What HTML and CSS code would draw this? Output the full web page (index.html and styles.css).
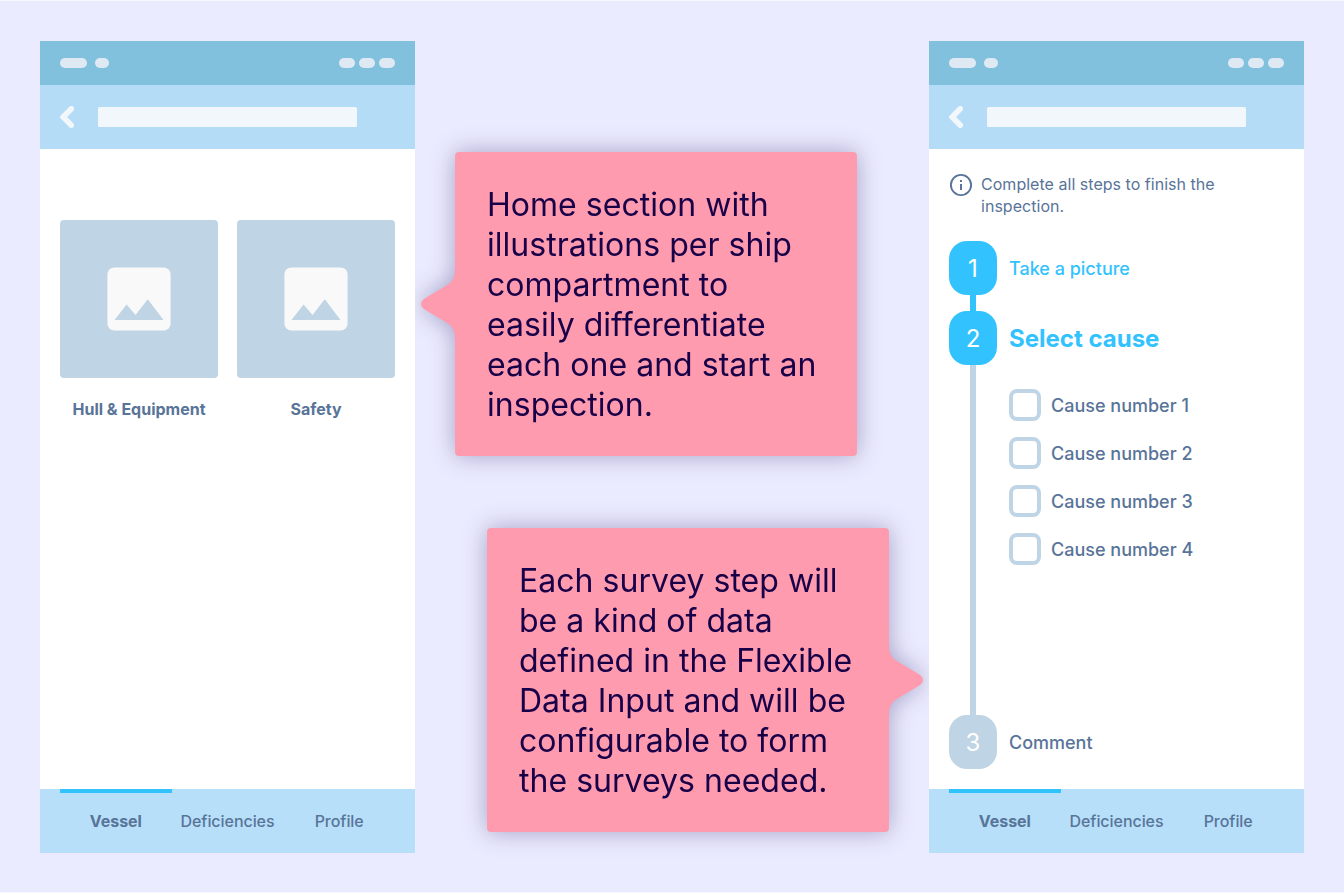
FILE: index.html
```html
<!DOCTYPE html>
<html lang="en">
<head>
<meta charset="utf-8">
<title>Vessel inspection</title>
<link rel="stylesheet" href="styles.css">
</head>
<body>
<main class="board">
  <section class="phone">
    <div class="status"><i class="pill wide"></i><i class="pill small"></i><span class="spacer"></span><i class="pill"></i><i class="pill"></i><i class="pill"></i></div>
    <header class="header">
      <svg class="back" width="14" height="22" viewBox="0 0 14 22"><path d="M11.300 2.800 3.100 11l8.200 8.200" fill="none" stroke="#f2f7fb" stroke-width="5.600" stroke-linecap="round" stroke-linejoin="miter"/></svg>
      <div class="title-bar"></div>
    </header>
    <div class="home">
      <figure class="card">
        <div class="thumb"><svg width="64" height="64" viewBox="0 0 64 64"><rect x=".4" y=".4" width="63.2" height="63.2" rx="7" fill="#f9f9f9"/><path d="M7.500 53 19.600 37.400 28.500 48 40.800 32.200 56.500 53Z" fill="#bfd4e5"/></svg></div>
        <figcaption>Hull &amp; Equipment</figcaption>
      </figure>
      <figure class="card">
        <div class="thumb"><svg width="64" height="64" viewBox="0 0 64 64"><rect x=".4" y=".4" width="63.2" height="63.2" rx="7" fill="#f9f9f9"/><path d="M7.500 53 19.600 37.400 28.500 48 40.800 32.200 56.500 53Z" fill="#bfd4e5"/></svg></div>
        <figcaption>Safety</figcaption>
      </figure>
    </div>
    <nav class="tabs"><span class="tab active">Vessel</span><span class="tab">Deficiencies</span><span class="tab">Profile</span></nav>
  </section>

  <div class="notes">
    <aside class="note note-left">
      <svg class="tail" width="36" height="68" viewBox="0 0 36 68"><path d="M36 0H35C35 7.500 32 12.500 26.500 15.500L5 28.300Q1 30.800 1 34Q1 37.200 5 39.700L26.500 52.500C32 55.500 35 60.500 35 68H36Z" fill="#ff9bae"/></svg>
      <p>Home section with<br>illustrations per ship<br>compartment to<br>easily differentiate<br>each one and start an<br>inspection.</p>
    </aside>
    <aside class="note note-right">
      <svg class="tail" width="36" height="68" viewBox="0 0 36 68"><path d="M36 0H35C35 7.500 32 12.500 26.500 15.500L5 28.300Q1 30.800 1 34Q1 37.200 5 39.700L26.500 52.500C32 55.500 35 60.500 35 68H36Z" fill="#ff9bae"/></svg>
      <p>Each survey step will<br>be a kind of data<br>defined in the Flexible<br>Data Input and will be<br>configurable to form<br>the surveys needed.</p>
    </aside>
  </div>

  <section class="phone">
    <div class="status"><i class="pill wide"></i><i class="pill small"></i><span class="spacer"></span><i class="pill"></i><i class="pill"></i><i class="pill"></i></div>
    <header class="header">
      <svg class="back" width="14" height="22" viewBox="0 0 14 22"><path d="M11.300 2.800 3.100 11l8.200 8.200" fill="none" stroke="#f2f7fb" stroke-width="5.600" stroke-linecap="round" stroke-linejoin="miter"/></svg>
      <div class="title-bar"></div>
    </header>
    <div class="survey">
      <div class="hint">
        <svg width="24" height="24" viewBox="0 0 24 24"><circle cx="12" cy="12" r="10.100" fill="none" stroke="#587498" stroke-width="1.900"/><path d="M11 7h2v2h-2zM11 11h2v6h-2z" fill="#587498"/></svg>
        <p>Complete all steps to finish the<br>inspection.</p>
      </div>
      <div class="step done"><span class="badge">1</span><span class="label">Take a picture</span></div>
      <div class="link done"></div>
      <div class="step done current"><span class="badge">2</span><span class="label">Select cause</span></div>
      <div class="step-body">
        <div class="link"></div>
        <div class="options">
          <label class="option"><span class="box"></span>Cause number 1</label>
          <label class="option"><span class="box"></span>Cause number 2</label>
          <label class="option"><span class="box"></span>Cause number 3</label>
          <label class="option"><span class="box"></span>Cause number 4</label>
        </div>
      </div>
      <div class="step"><span class="badge">3</span><span class="label">Comment</span></div>
    </div>
    <nav class="tabs"><span class="tab active">Vessel</span><span class="tab">Deficiencies</span><span class="tab">Profile</span></nav>
  </section>
</main>
</body>
</html>
```
FILE: styles.css
```css
* { box-sizing: border-box; }
body { margin: 0; font-family: Inter, "Liberation Sans", sans-serif; color: #587498; }
p, figure { margin: 0; }
svg { display: block; flex: none; }
.board {
  display: flex;
  justify-content: space-between;
  height: 893px;
  padding: 40px;
  background: #eaebff;
  border-top: 1px solid #f6f7ff;
  border-bottom: 1px solid #f6f7ff;
}
.phone {
  position: relative;
  z-index: 1;
  display: flex;
  flex-direction: column;
  width: 375px;
  height: 812px;
  background: #fff;
}
.status {
  display: flex;
  align-items: center;
  gap: 4px;
  height: 44px;
  padding: 0 20px;
  background: #81c1dd;
}
.pill { width: 16px; height: 10px; border-radius: 5px; background: #dfe9f3; }
.pill.wide { width: 27px; margin-right: 4px; }
.pill.small { width: 14px; }
.spacer { flex: 1; }
.header {
  display: flex;
  align-items: center;
  gap: 24px;
  height: 64px;
  padding: 0 20px;
  background: #b4dcf7;
}
.title-bar { width: 259px; height: 20px; border-radius: 1.500px; background: #f2f7fb; }
.home { flex: 1; display: flex; gap: 19px; padding: 71px 20px 0; }
.card { width: 158px; text-align: center; }
.thumb {
  display: flex;
  align-items: center;
  justify-content: center;
  height: 158px;
  border-radius: 4px;
  background: #bfd4e5;
}
.card figcaption { margin-top: 20px; font-size: 16px; line-height: 22px; font-weight: 700; }
.tabs { display: flex; height: 64px; padding: 0 20px; background: #b7dffa; }
.tab {
  flex: 1 1 0;
  border-top: 4px solid transparent;
  text-align: center;
  font-size: 16px;
  line-height: 57px;
  font-weight: 500;
  letter-spacing: -.05px;
}
.tab.active { border-color: #32c3ff; font-weight: 700; }

.notes { display: flex; flex-direction: column; gap: 72px; width: 434px; padding-top: 111px; }
.note {
  position: relative;
  width: 402px;
  height: 304px;
  padding: 33px 32px 31px;
  border-radius: 4px;
  background: #ff9bae;
  color: #180048;
  font-size: 32px;
  line-height: 40px;
  letter-spacing: .03px;
  white-space: nowrap;
  filter: drop-shadow(0 0 12px rgba(24, 0, 72, .32));
}
.note-right { align-self: flex-end; }
.tail { position: absolute; left: -35px; top: 118px; }
.note-right .tail { left: auto; right: -35px; transform: scaleX(-1); }

.survey { flex: 1; display: flex; flex-direction: column; padding: 24px 20px 20px; }
.hint { display: flex; gap: 8px; height: 68px; font-size: 16px; line-height: 22px; letter-spacing: .03px; }
.step { display: flex; align-items: center; gap: 12px; height: 54px; font-size: 18px; font-weight: 500; }
.badge {
  width: 48px;
  height: 54px;
  border-radius: 18px;
  background: #bfd4e5;
  color: #fff;
  text-align: center;
  font-size: 24px;
  font-weight: 400;
  line-height: 56px;
}
.done { color: #32c3ff; }
.done .badge, .link.done { background: #32c3ff; }
.current .label { font-size: 24px; font-weight: 700; }
.link { width: 6px; margin-left: 21px; background: #bfd4e5; }
.link.done { height: 16px; }
.step-body { flex: 1; display: flex; gap: 33px; }
.options { display: flex; flex-direction: column; gap: 16px; padding-top: 24px; }
.option { display: flex; align-items: center; gap: 10px; height: 32px; font-size: 18px; font-weight: 500; }
.box { width: 32px; height: 32px; border: 4px solid #bfd4e5; border-radius: 8px; }
```
